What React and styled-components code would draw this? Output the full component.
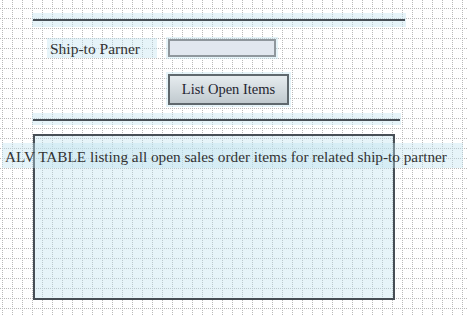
import React from "react";
import styled, { createGlobalStyle } from "styled-components";

const band = "rgba(190, 225, 240, 0.38)";
const ink = "#474f56";
const serif = `"Liberation Serif", "DejaVu Serif", serif`;

const GlobalStyle = createGlobalStyle`
  html, body { margin: 0; padding: 0; }
  body {
    width: 467px;
    height: 315px;
    overflow: hidden;
    background: #fff;
    font-family: ${serif};
  }
`;

const Canvas = styled.div`
  position: relative;
  width: 467px;
  height: 315px;
  box-sizing: border-box;
  padding-top: 13px;
  display: flex;
  flex-direction: column;
  align-items: flex-start;
  background-color: #fff;
  background-image:
    linear-gradient(to right, transparent 1px, #fff 1px),
    linear-gradient(to bottom, transparent 1px, #fff 1px),
    linear-gradient(to bottom, transparent 8px, #b9b9b9 8px, #b9b9b9 9px, transparent 9px),
    linear-gradient(to right, transparent 2px, #b9b9b9 2px, #b9b9b9 3px, transparent 3px);
  background-size: 2px 2px, 2px 2px, 10px 10px, 10px 10px;
`;

const Separator = styled.div`
  margin-left: 32px;
  margin-top: ${(p) => p.$top}px;
  width: ${(p) => p.$width}px;
  height: ${(p) => p.$height}px;
  box-sizing: border-box;
  padding-top: 6px;
  background: ${band};
`;

const Rule = styled.div`
  margin-left: 1px;
  width: calc(100% - 2px);
  height: 2px;
  background: ${ink};
`;

const FormRow = styled.div`
  margin-top: 11px;
  margin-left: 47px;
  display: flex;
  align-items: center;
  gap: 11px;
  height: 20px;
`;

const FieldLabel = styled.div`
  width: 110px;
  height: 20px;
  box-sizing: border-box;
  padding: 2px 0 0 3px;
  display: flex;
  align-items: center;
  background: ${band};
  color: #333;
  font-size: 15.5px;
`;

const TextInput = styled.input`
  width: 108px;
  height: 18px;
  box-sizing: border-box;
  margin: 0;
  border: 2px solid #8f979d;
  background: #e1e7ef;
  box-shadow: 0 0 0 2px ${band};
  outline: none;
`;

const ButtonRow = styled.div`
  margin-top: 16px;
  margin-left: 168px;
  display: flex;
`;

const Button = styled.button`
  width: 121px;
  height: 31px;
  box-sizing: border-box;
  margin: 0;
  padding: 0;
  border: 2px solid #5f686d;
  background: linear-gradient(to bottom, #e6ecef, #c1cacf);
  box-shadow: 0 0 0 2px ${band};
  color: #1f2430;
  font-family: ${serif};
  font-size: 14.5px;
`;

const TableArea = styled.div`
  position: relative;
  margin-top: 9px;
  margin-left: 33px;
  width: 362px;
  height: 166px;
`;

const TableBox = styled.div`
  width: 100%;
  height: 100%;
  box-sizing: border-box;
  border: 2px solid ${ink};
  background: ${band};
`;

const TableCaption = styled.div`
  position: absolute;
  top: 9px;
  left: -31px;
  width: 461px;
  height: 25px;
  box-sizing: border-box;
  padding: 2px 0 0 3px;
  display: flex;
  align-items: center;
  background: ${band};
  color: #333;
  font-size: 15.25px;
  white-space: nowrap;
`;

export default function App() {
  return (
    <>
      <GlobalStyle />
      <Canvas>
        <Separator $top={0} $width={374} $height={14}>
          <Rule />
        </Separator>
        <FormRow>
          <FieldLabel>Ship-to Parner</FieldLabel>
          <TextInput type="text" />
        </FormRow>
        <ButtonRow>
          <Button type="button">List Open Items</Button>
        </ButtonRow>
        <Separator $top={8} $width={369} $height={12}>
          <Rule />
        </Separator>
        <TableArea>
          <TableBox />
          <TableCaption>
            ALV TABLE listing all open sales order items for related ship-to partner
          </TableCaption>
        </TableArea>
      </Canvas>
    </>
  );
}
